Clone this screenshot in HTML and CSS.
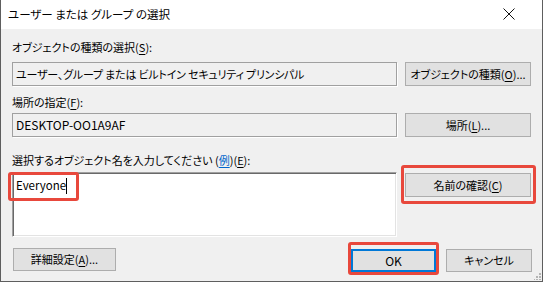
FILE: index.html
```html
<!DOCTYPE html>
<html lang="ja">
<head>
<meta charset="utf-8">
<title>ユーザー または グループ の選択</title>
<link rel="stylesheet" href="styles.css">
</head>
<body>
<div class="window">
  <div class="titlebar">
    <span class="title">ユーザー または グループ の選択</span>
    <svg class="close" width="12" height="12" viewBox="0 0 12 12"><path d="M0.5 0.5 L11.5 11.5 M11.5 0.5 L0.5 11.5" stroke="#111" stroke-width="1" fill="none"/></svg>
  </div>
  <div class="content">
    <div class="label l1">オブジェクトの種類の選択(<u>S</u>):</div>
    <div class="row r1">
      <div class="field field-jp">ユーザー、グループ または ビルトイン セキュリティ プリンシパル</div>
      <div class="btn">オブジェクトの種類(<u>O</u>)...</div>
    </div>
    <div class="label l2">場所の指定(<u>F</u>):</div>
    <div class="row r2">
      <div class="field field-latin">DESKTOP-OO1A9AF</div>
      <div class="btn">場所(<u>L</u>)...</div>
    </div>
    <div class="label l3">選択するオブジェクト名を入力してください (<span class="link">例</span>)(<u>E</u>):</div>
    <div class="row r3">
      <div class="textarea">
        <span class="typed">Everyone</span><span class="caret"></span>
        <div class="mark mark-input"></div>
      </div>
      <div class="btnwrap">
        <div class="btn">名前の確認(<u>C</u>)</div>
        <div class="mark mark-check"></div>
      </div>
    </div>
    <div class="footer">
      <div class="btn btn-adv">詳細設定(<u>A</u>)...</div>
      <div class="okwrap">
        <div class="btn btn-ok">OK</div>
        <div class="mark mark-ok"></div>
      </div>
      <div class="btn btn-cancel">キャンセル</div>
    </div>
  </div>
  <svg class="grip" width="7" height="7" viewBox="0 0 7 7">
    <rect x="5" y="0" width="2" height="2" fill="#b4b4b4"/>
    <rect x="2" y="3" width="2" height="2" fill="#b4b4b4"/>
    <rect x="5" y="3" width="2" height="2" fill="#b4b4b4"/>
    <rect x="-1" y="6" width="2" height="2" fill="#b4b4b4"/>
    <rect x="2" y="6" width="2" height="2" fill="#b4b4b4"/>
    <rect x="5" y="6" width="2" height="2" fill="#b4b4b4"/>
  </svg>
</div>
</body>
</html>
```

FILE: styles.css
```css
* { box-sizing: border-box; }
html, body { margin: 0; padding: 0; }
body {
  width: 543px;
  height: 282px;
  overflow: hidden;
  font-family: "Noto Sans CJK JP", "Noto Sans", sans-serif;
  font-size: 11px;
  font-feature-settings: "palt";
  color: #000;
  background: #f0f0f0;
}
.window {
  position: relative;
  width: 543px;
  height: 282px;
  border: 1px solid #5e5e5e;
  border-top: none;
  background: #f0f0f0;
}
.titlebar {
  height: 29px;
  background: #fff;
  display: flex;
  align-items: center;
  justify-content: space-between;
  padding: 0 27px 0 7px;
}
.title { line-height: 16px; margin-top: -1px; font-size: 11.5px; }
.close { display: block; margin-top: -1px; }
.content {
  padding: 0 10px 0 11px;
}
.label { line-height: 16px; white-space: nowrap; }
.l1 { margin-top: 10px; }
.l2 { margin-top: 8px; }
.l3 { margin-top: 15px; }
.row {
  display: grid;
  grid-template-columns: 385px 126px;
  column-gap: 8px;
  align-items: start;
}
.r1 { margin-top: 7px; }
.r2 { margin-top: 3px; }
.r3 { margin-top: 4px; }
.field {
  height: 24px;
  border: 1px solid #a0a0a0;
  box-shadow: 1px 1px 0 #fff;
  padding: 0 3px;
  line-height: 22px;
  white-space: nowrap;
  overflow: hidden;
}
.field-jp { letter-spacing: -0.2px; }
.field-latin { font-size: 12px; }
.btn {
  height: 24px;
  background: #e1e1e1;
  border: 1px solid #adadad;
  text-align: center;
  line-height: 22px;
  white-space: nowrap;
}
u { text-decoration: underline; text-underline-offset: 2px; }
.link { color: #0066cc; text-decoration: underline; text-underline-offset: 2px; }
.textarea {
  position: relative;
  height: 65px;
  background: #fff;
  border-top: 1px solid #a0a0a0;
  border-left: 1px solid #a0a0a0;
  border-right: 1px solid #fff;
  border-bottom: 1px solid #fff;
  box-shadow: inset 1px 1px 0 #696969, inset -1px -1px 0 #e3e3e3;
  padding: 4px 0 0 3px;
  line-height: 16px;
}
.typed { font-size: 11.5px; }
.caret {
  display: inline-block;
  width: 1px;
  height: 16px;
  background: #000;
  vertical-align: -4px;
}
.btnwrap { position: relative; margin-top: 1px; }
.mark {
  position: absolute;
  border: 3px solid #e8483c;
  border-radius: 3px;
  pointer-events: none;
}
.mark-input { left: -5px; top: -1px; width: 71px; height: 29px; }
.mark-check { left: -4px; top: -8px; width: 135px; height: 39px; }
.footer {
  display: flex;
  align-items: flex-start;
  margin-top: 11px;
  padding-left: 1px;
}
.btn-adv { width: 103px; height: 23px; line-height: 21px; }
.okwrap { position: relative; margin-left: auto; margin-top: 1px; }
.btn-ok {
  width: 85px;
  height: 23px;
  border: 2px solid #0078d7;
  line-height: 19px;
  font-size: 12px;
}
.mark-ok { left: -3px; top: -7px; width: 91px; height: 33px; }
.btn-cancel {
  width: 86px;
  height: 23px;
  line-height: 21px;
  margin-left: 10px;
  margin-top: 1px;
}
.grip { position: absolute; right: 1px; bottom: 1px; display: block; }
```
